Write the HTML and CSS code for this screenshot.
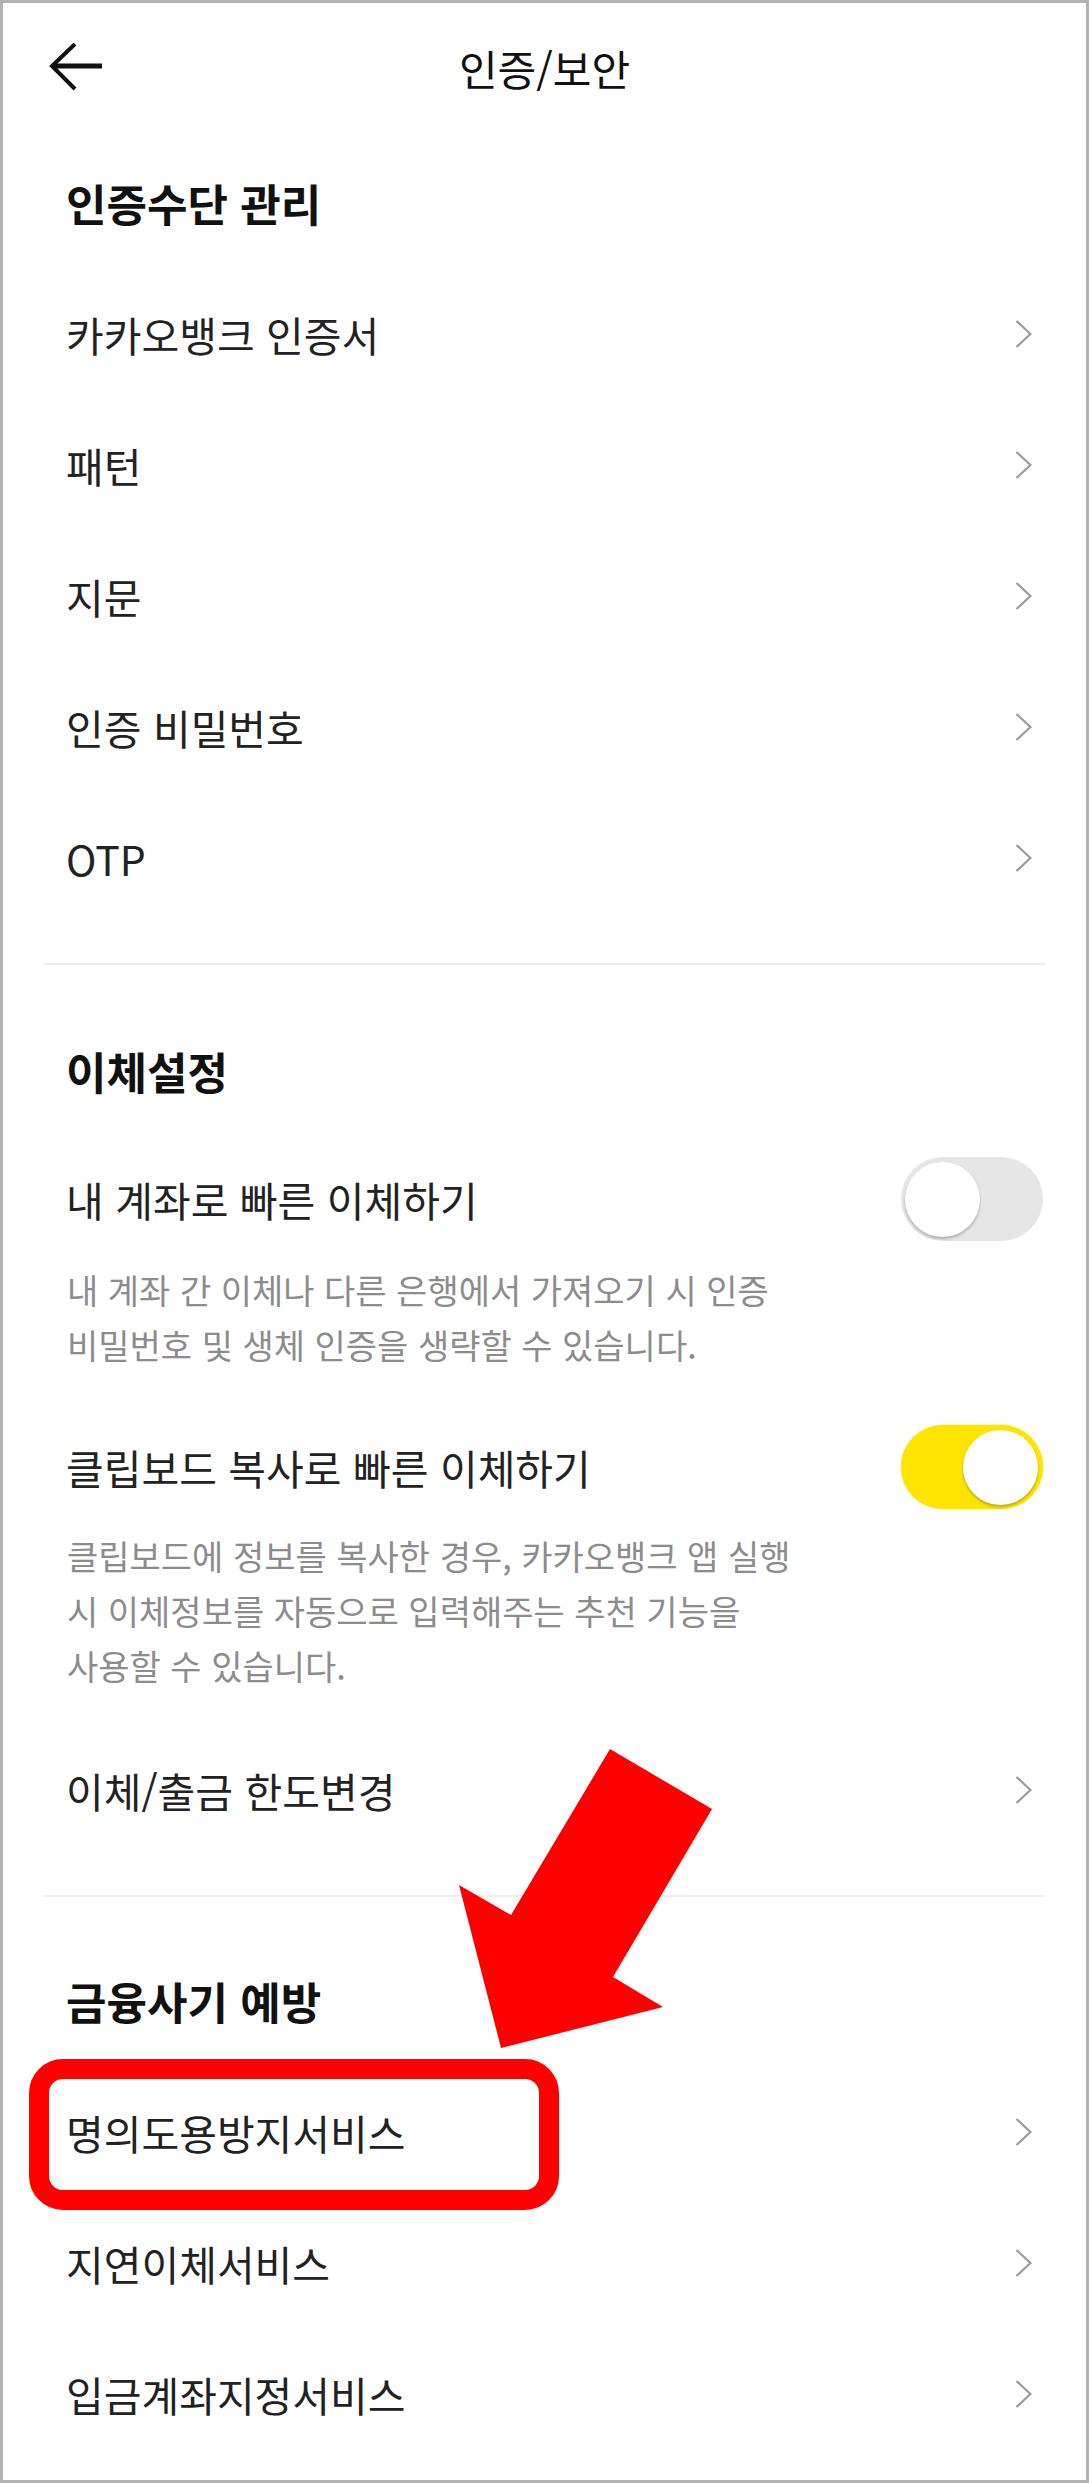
FILE: index.html
```html
<!DOCTYPE html>
<html lang="ko">
<head>
<meta charset="utf-8">
<title>인증/보안</title>
<link rel="stylesheet" href="styles.css">
</head>
<body>
<div class="frame">
  <header class="topbar">
    <div class="back">
      <svg width="56" height="50" viewBox="0 0 56 50" aria-hidden="true">
        <path d="M4 23 H54" stroke="#111" stroke-width="5" fill="none"/>
        <path d="M27 1 L4 23 L27 46" stroke="#111" stroke-width="4" fill="none" stroke-linejoin="miter"/>
      </svg>
    </div>
    <h1 class="title">인증/보안</h1>
    <div></div>
  </header>

  <section class="group">
    <h2 class="group-title">인증수단 관리</h2>
    <div class="row"><span class="label">카카오뱅크 인증서</span><svg class="chev" width="17" height="28" viewBox="0 0 17 28" aria-hidden="true"><polyline points="1.5,1 15.5,14 1.5,27" fill="none" stroke="#9a9a9a" stroke-width="2.2"/></svg></div>
    <div class="row"><span class="label">패턴</span><svg class="chev" width="17" height="28" viewBox="0 0 17 28" aria-hidden="true"><polyline points="1.5,1 15.5,14 1.5,27" fill="none" stroke="#9a9a9a" stroke-width="2.2"/></svg></div>
    <div class="row"><span class="label">지문</span><svg class="chev" width="17" height="28" viewBox="0 0 17 28" aria-hidden="true"><polyline points="1.5,1 15.5,14 1.5,27" fill="none" stroke="#9a9a9a" stroke-width="2.2"/></svg></div>
    <div class="row"><span class="label">인증 비밀번호</span><svg class="chev" width="17" height="28" viewBox="0 0 17 28" aria-hidden="true"><polyline points="1.5,1 15.5,14 1.5,27" fill="none" stroke="#9a9a9a" stroke-width="2.2"/></svg></div>
    <div class="row"><span class="label">OTP</span><svg class="chev" width="17" height="28" viewBox="0 0 17 28" aria-hidden="true"><polyline points="1.5,1 15.5,14 1.5,27" fill="none" stroke="#9a9a9a" stroke-width="2.2"/></svg></div>
  </section>

  <hr class="divider">

  <section class="group">
    <h2 class="group-title">이체설정</h2>
    <div class="row toggle-row first">
      <span class="label">내 계좌로 빠른 이체하기</span>
      <span class="switch"><span class="knob"></span></span>
    </div>
    <p class="desc">내 계좌 간 이체나 다른 은행에서 가져오기 시 인증<br>비밀번호 및 생체 인증을 생략할 수 있습니다.</p>
    <div class="row toggle-row second">
      <span class="label">클립보드 복사로 빠른 이체하기</span>
      <span class="switch on"><span class="knob"></span></span>
    </div>
    <p class="desc">클립보드에 정보를 복사한 경우, 카카오뱅크 앱 실행<br>시 이체정보를 자동으로 입력해주는 추천 기능을<br>사용할 수 있습니다.</p>
    <div class="row after-desc"><span class="label">이체/출금 한도변경</span><svg class="chev" width="17" height="28" viewBox="0 0 17 28" aria-hidden="true"><polyline points="1.5,1 15.5,14 1.5,27" fill="none" stroke="#9a9a9a" stroke-width="2.2"/></svg></div>
  </section>

  <hr class="divider">

  <section class="group">
    <h2 class="group-title tight">금융사기 예방</h2>
    <div class="row"><span class="label">명의도용방지서비스</span><svg class="chev" width="17" height="28" viewBox="0 0 17 28" aria-hidden="true"><polyline points="1.5,1 15.5,14 1.5,27" fill="none" stroke="#9a9a9a" stroke-width="2.2"/></svg></div>
    <div class="row"><span class="label">지연이체서비스</span><svg class="chev" width="17" height="28" viewBox="0 0 17 28" aria-hidden="true"><polyline points="1.5,1 15.5,14 1.5,27" fill="none" stroke="#9a9a9a" stroke-width="2.2"/></svg></div>
    <div class="row"><span class="label">입금계좌지정서비스</span><svg class="chev" width="17" height="28" viewBox="0 0 17 28" aria-hidden="true"><polyline points="1.5,1 15.5,14 1.5,27" fill="none" stroke="#9a9a9a" stroke-width="2.2"/></svg></div>
  </section>

  <svg class="annotation" width="1089" height="2483" viewBox="0 0 1089 2483" aria-hidden="true">
    <polygon points="610,1749 712,1809 613,1977 663,2007 501,2048 459,1885 511,1915" fill="#ff0000"/>
    <rect x="39" y="2069" width="510" height="131" rx="24" ry="24" fill="none" stroke="#ff0000" stroke-width="20"/>
  </svg>
</div>
</body>
</html>
```
FILE: styles.css
```css
* { box-sizing: border-box; }

html, body {
  margin: 0;
  padding: 0;
  background: #ffffff;
}

body {
  font-family: "Noto Sans CJK KR", "Noto Sans", "Liberation Sans", sans-serif;
  color: #222222;
}

.frame {
  position: relative;
  width: 1089px;
  height: 2483px;
  border: 3px solid #b2b2b2;
  overflow: hidden;
  background: #ffffff;
}

.topbar {
  height: 134px;
  display: grid;
  grid-template-columns: 1fr auto 1fr;
  align-items: center;
}

.back {
  padding-left: 45px;
  display: flex;
  align-items: center;
  margin-top: -4px;
}

.back svg { display: block; }

.title {
  margin: -6px 0 0 0;
  font-size: 42px;
  font-weight: 400;
  color: #111111;
}

.group { margin: 0; }

.group-title {
  margin: 0;
  height: 131px;
  display: flex;
  align-items: center;
  padding-left: 63px;
  font-size: 44px;
  font-weight: 700;
  color: #111111;
}

.divider {
  border: 0;
  height: 2px;
  background: #eeeeee;
  margin: 40px 41px 40px 41px;
}

.group-title.tight { margin-top: -2px; }

.row {
  height: 131px;
  display: flex;
  align-items: center;
  justify-content: space-between;
  padding-left: 63px;
  padding-right: 54px;
}

.label {
  font-size: 41px;
  font-weight: 400;
  color: #222222;
}

.chev {
  display: block;
  flex: none;
}

.toggle-row {
  padding-right: 43px;
}

.toggle-row.first { height: 126px; }

.toggle-row.second {
  height: 122px;
  margin-top: 34px;
}

.switch {
  width: 142px;
  height: 84px;
  border-radius: 42px;
  background: #e6e6e6;
  position: relative;
  flex: none;
}

.switch .knob {
  position: absolute;
  top: 5px;
  left: 4px;
  width: 75px;
  height: 75px;
  border-radius: 50%;
  background: #ffffff;
  box-shadow: 0 2px 3px rgba(0, 0, 0, 0.25);
}

.switch.on {
  background: #fee500;
  box-shadow: 0 0 2px rgba(240, 215, 0, 0.9);
}

.switch.on .knob {
  left: auto;
  right: 5px;
  box-shadow: 0 2px 3px rgba(120, 100, 0, 0.45);
}

.desc {
  margin: 0;
  padding-left: 64px;
  font-size: 34px;
  line-height: 55px;
  color: #8c8c8c;
}

.after-desc { margin-top: 31px; }

.annotation {
  position: absolute;
  top: -3px;
  left: -3px;
  pointer-events: none;
}
```
